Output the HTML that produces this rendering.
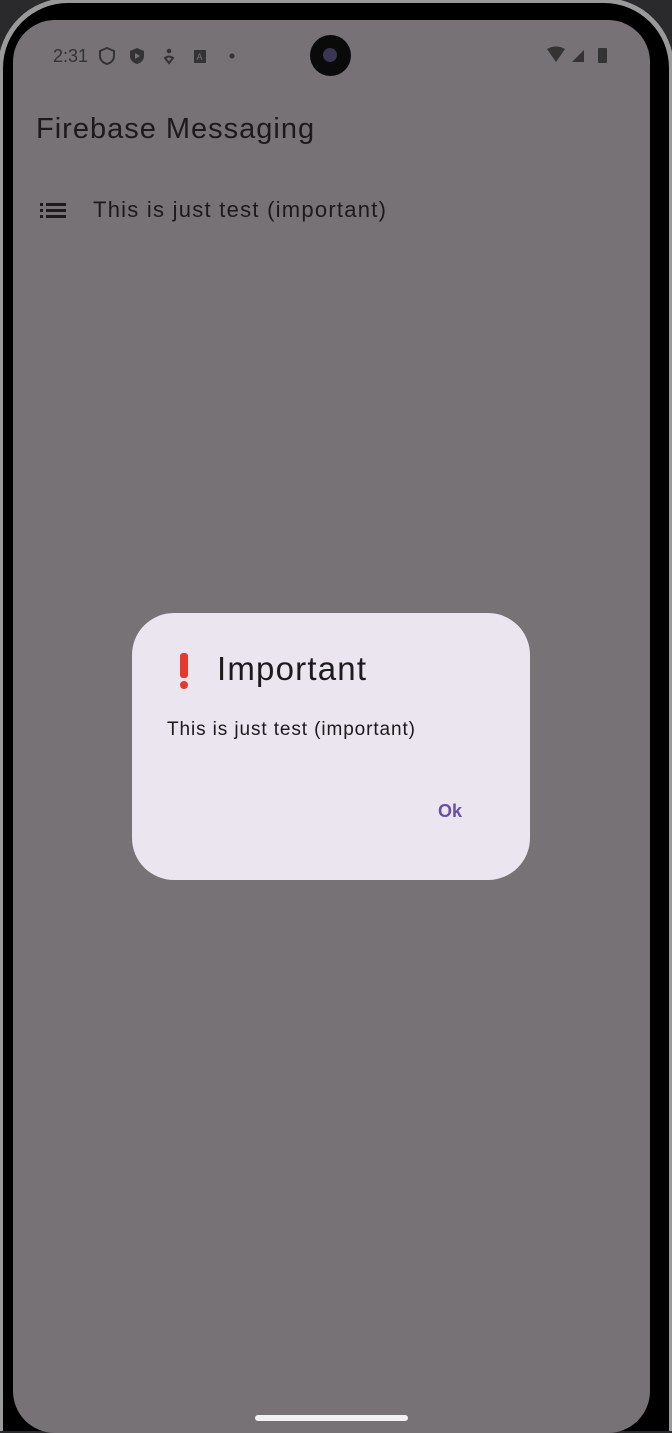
<!DOCTYPE html>
<html style="width:672px;height:1433px;overflow:hidden"><head><meta charset="utf-8"><style>
*{margin:0;padding:0;box-sizing:border-box}
body{width:672px;height:1433px;background:#2a2a2c;position:relative;overflow:hidden;font-family:"Liberation Sans",sans-serif}
.frame{position:absolute;left:-2px;top:-2px;width:676px;height:1433px;border-radius:70px 70px 0 0;background:#000;border:5px solid #9a9a9a;border-bottom:none}
.screen{position:absolute;left:13px;top:20px;width:637px;height:1413px;border-radius:42px;background:#777276;overflow:hidden}
.t{position:absolute;color:#1c1a1d;white-space:nowrap}
.dlg{position:absolute;left:132px;top:613px;width:398px;height:267px;border-radius:42px;background:#ebe5ef}
</style></head><body>
<div class="frame"></div>
<div class="screen">
 <div class="t" style="left:40px;top:26px;font-size:18px;color:#333">2:31</div>
 <svg style="position:absolute;left:84px;top:26px" width="140" height="20">
  <path d="M10 2 L17 5 V10 C17 14 14 17 10 18 C6 17 3 14 3 10 V5 Z" fill="none" stroke="#333" stroke-width="2"/>
  <path d="M40 2 L47 5 V10 C47 14 44 17 40 18 C36 17 33 14 33 10 V5 Z" fill="#333"/><path d="M38 7 L43 10 L38 13Z" fill="#777276"/>
  <circle cx="72" cy="5" r="2.3" fill="#333"/><path d="M68 12 Q72 9 76 12 L72 17Z" fill="none" stroke="#333" stroke-width="2"/>
  <rect x="97" y="4" width="12" height="13" fill="#333"/><text x="99.5" y="14" font-size="9" fill="#777276" font-family="Liberation Sans">A</text>
  <circle cx="135" cy="10" r="2.5" fill="#333"/>
 </svg>
 <div style="position:absolute;left:297px;top:15px;width:41px;height:41px;border-radius:50%;background:#0a0a0a"><div style="position:absolute;left:13px;top:13px;width:14px;height:14px;border-radius:50%;background:#3a3550"></div></div>
 <svg style="position:absolute;left:533px;top:26px" width="70" height="20">
  <path d="M1 3 Q10 -2 19 3 L10 16Z" fill="#333"/>
  <path d="M26 16 L38 4 V16Z" fill="#333"/>
  <rect x="52" y="2" width="9" height="15" rx="1" fill="#333"/>
 </svg>
 <div class="t" style="left:23px;top:93px;font-size:29px;letter-spacing:1px">Firebase Messaging</div>
 <svg style="position:absolute;left:27px;top:183px" width="26" height="16"><g fill="#1c1a1d"><rect x="0" y="0" width="3" height="3"/><rect x="6" y="0" width="20" height="3"/><rect x="0" y="6" width="3" height="3"/><rect x="6" y="6" width="20" height="3"/><rect x="0" y="12" width="3" height="3"/><rect x="6" y="12" width="20" height="3"/></g></svg>
 <div class="t" style="left:80px;top:177px;font-size:22px;letter-spacing:1.25px">This is just test (important)</div>
 <div style="position:absolute;left:242px;top:1395px;width:153px;height:6px;border-radius:3px;background:#f2f2f2"></div>
</div>
<div class="dlg">
 <svg style="position:absolute;left:45px;top:40px" width="14" height="37"><rect x="3" y="0" width="8" height="25" rx="3" fill="#e8372c"/><circle cx="7" cy="32" r="4" fill="#e8372c"/></svg>
 <div class="t" style="left:85px;top:37px;font-size:33px;letter-spacing:1.2px">Important</div>
 <div class="t" style="left:35px;top:106px;font-size:19px;letter-spacing:0.9px;color:#1c1a1d">This is just test (important)</div>
 <div class="t" style="left:306px;top:188px;font-size:18px;color:#6750a4;font-weight:bold">Ok</div>
</div>
</body></html>
